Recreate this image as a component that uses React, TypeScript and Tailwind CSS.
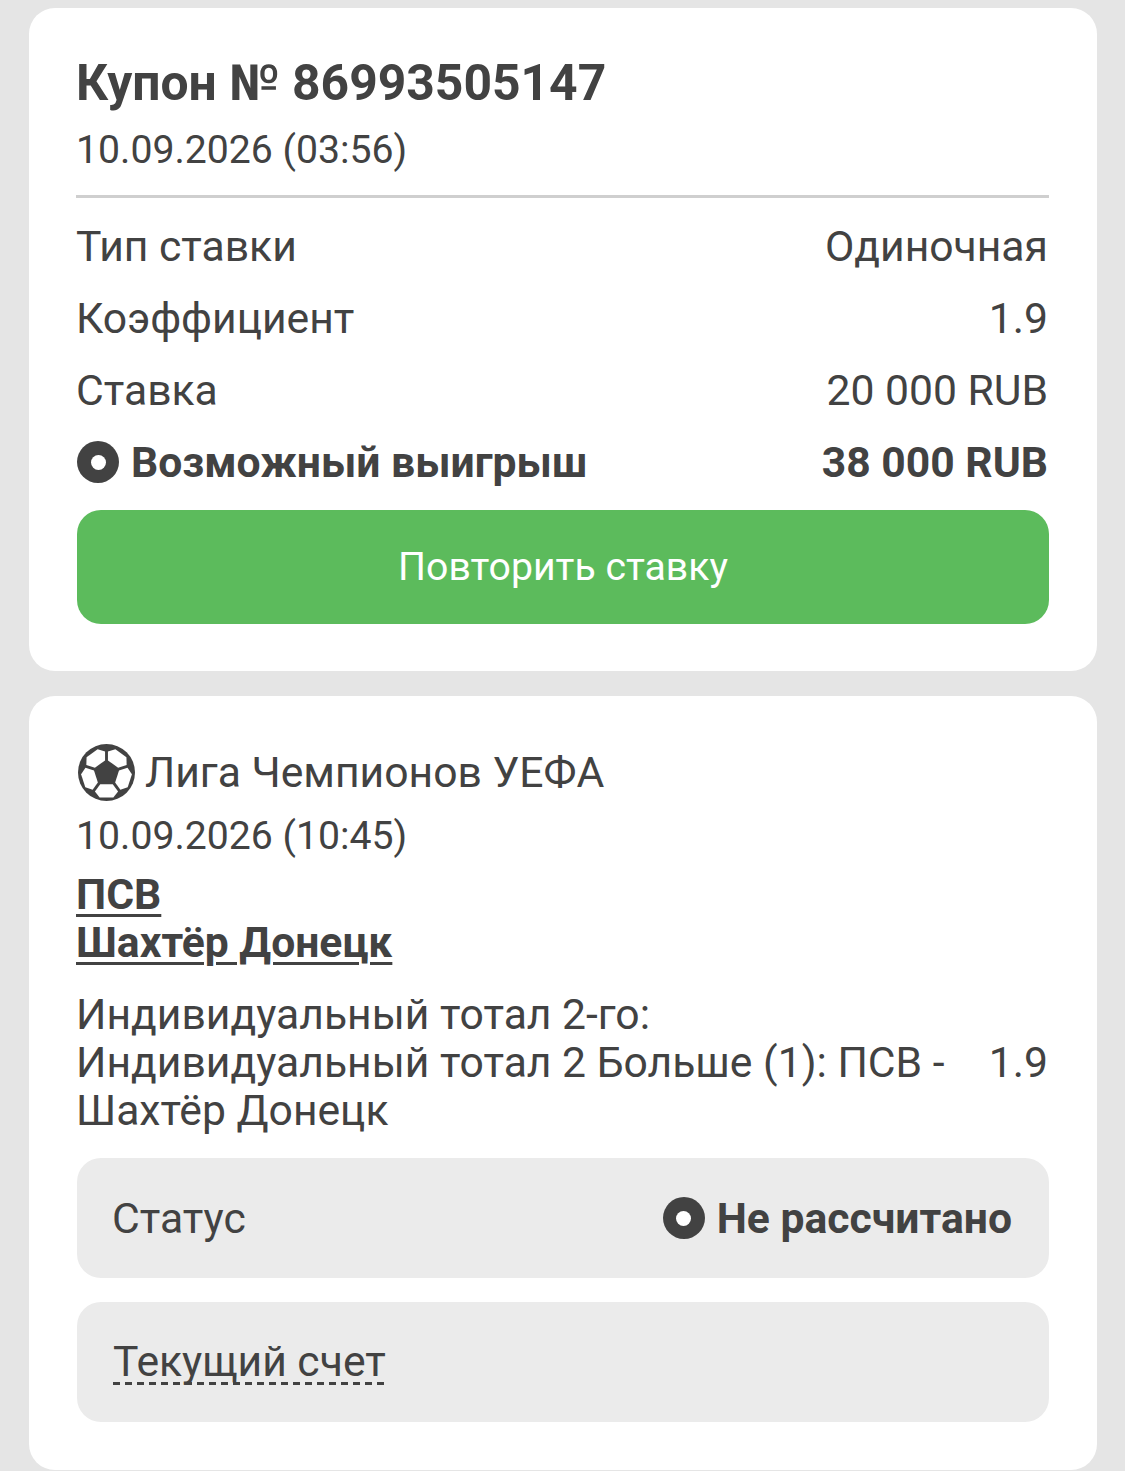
import React from "react";

const font = { fontFamily: "Roboto, sans-serif" };

const Dot = () => (
  <span className="inline-flex w-[42px] h-[42px] shrink-0 items-center justify-center rounded-full bg-[#424242]">
    <span className="w-[15px] h-[15px] rounded-full bg-white" />
  </span>
);

const Ball = () => (
  <svg width="57" height="57" viewBox="0 0 100 100" className="shrink-0 ml-[1px]">
    <circle cx="50" cy="50" r="50" fill="#424242" />
    {[36, 108, 180, 252, 324].map((a) => (
      <polygon
        key={a}
        points="39,31.5 61,31.5 70.3,18.8 62,8 38,8 29.7,18.8"
        fill="#fff"
        transform={`rotate(${a} 50 51)`}
      />
    ))}
    <polygon points="50,32 68,45 61,66.5 39,66.5 32,45" fill="#424242" />
  </svg>
);

const Row = ({ label, value }: { label: string; value: string }) => (
  <div className="flex justify-between items-center h-[72px] -ml-px pr-[1px]">
    <span>{label}</span>
    <span>{value}</span>
  </div>
);

export default function App() {
  return (
    <div style={font} className="w-[1125px] h-[1471px] overflow-hidden bg-[#e5e5e5] pl-[29px] pr-[28px] pt-[8px] text-[42.67px] leading-[48px] text-[#424242]">
      <div className="bg-white rounded-[26px] px-[48px] pt-[47px] h-[663px]">
        <h1 className="-ml-px text-[49.8px] leading-[56px] font-bold">Купон № 86993505147</h1>
        <div className="-ml-px mt-[15px] pb-[21px] border-b-[3px] border-[#cfcfcf] text-[39.2px]">10.09.2026 (03:56)</div>
        <div className="mt-[12px]">
          <Row label="Тип ставки" value="Одиночная" />
          <Row label="Коэффициент" value="1.9" />
          <Row label="Ставка" value="20 000 RUB" />
          <div className="flex justify-between items-center h-[72px] pr-[1px] font-bold">
            <span className="flex items-center gap-[12px]">
              <Dot />
              Возможный выигрыш
            </span>
            <span>38 000 RUB</span>
          </div>
        </div>
        <div className="mt-[12px] h-[114px] rounded-[24px] bg-[#5cbb5c] flex items-center justify-center text-white text-[39.2px]">
          Повторить ставку
        </div>
      </div>

      <div className="mt-[25px] bg-white rounded-[26px] px-[48px] pt-[46px] h-[774px]">
        <div className="flex items-center gap-[10px] h-[60px]">
          <Ball />
          <span>Лига Чемпионов УЕФА</span>
        </div>
        <div className="-ml-px mt-[10px] text-[39.2px]">10.09.2026 (10:45)</div>
        <div className="-ml-px mt-[10px] font-bold underline decoration-[3px] underline-offset-[5px]">
          <div>ПСВ</div>
          <div>Шахтёр Донецк</div>
        </div>
        <div className="-ml-px mt-[24px] flex justify-between pr-[1px]">
          <div className="w-[880px]">
            Индивидуальный тотал 2-го:
            <br />
            Индивидуальный тотал 2 Больше (1): ПСВ - Шахтёр Донецк
          </div>
          <div className="mt-[48px]">1.9</div>
        </div>
        <div className="mt-[24px] h-[120px] rounded-[24px] bg-[#ebebeb] pl-[35px] pr-[37px] flex items-center justify-between">
          <span>Статус</span>
          <span className="flex items-center gap-[12px] font-bold">
            <Dot />
            Не рассчитано
          </span>
        </div>
        <div className="mt-[24px] h-[120px] rounded-[24px] bg-[#ebebeb] pl-[36px] flex items-center">
          <span className="pb-[2px] leading-[44px] bg-[repeating-linear-gradient(90deg,#424242_0_7px,transparent_7px_12px)] bg-bottom bg-no-repeat bg-[length:100%_3px]">
            Текущий счет
          </span>
        </div>
      </div>
    </div>
  );
}
